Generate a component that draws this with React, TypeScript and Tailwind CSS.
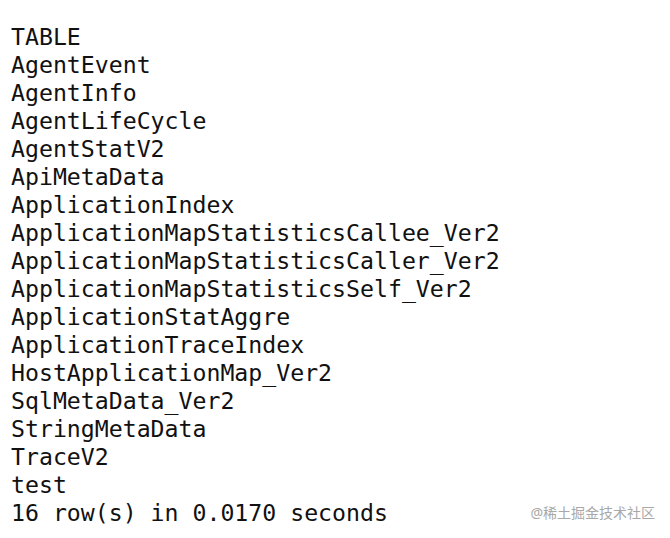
const rows = [
  'TABLE',
  'AgentEvent',
  'AgentInfo',
  'AgentLifeCycle',
  'AgentStatV2',
  'ApiMetaData',
  'ApplicationIndex',
  'ApplicationMapStatisticsCallee_Ver2',
  'ApplicationMapStatisticsCaller_Ver2',
  'ApplicationMapStatisticsSelf_Ver2',
  'ApplicationStatAggre',
  'ApplicationTraceIndex',
  'HostApplicationMap_Ver2',
  'SqlMetaData_Ver2',
  'StringMetaData',
  'TraceV2',
  'test',
  '16 row(s) in 0.0170 seconds',
];

export default function App() {
  return (
    <div className="relative w-[670px] h-[538px] bg-white overflow-hidden">
      <div className="pt-[23px] pl-[11px] font-['DejaVu_Sans_Mono',monospace] text-[23.2px] leading-[28px] text-[#111] whitespace-pre">
        {rows.map((r, i) => (
          <div key={i}>{r}</div>
        ))}
      </div>
      {/* watermark */}
      <div className="absolute right-[15px] bottom-[16px] text-[14px] leading-[18px] text-[#a8a8a8] font-['Noto_Sans','Noto_Sans_CJK_SC',sans-serif]">
        @稀土掘金技术社区
      </div>
    </div>
  );
}
